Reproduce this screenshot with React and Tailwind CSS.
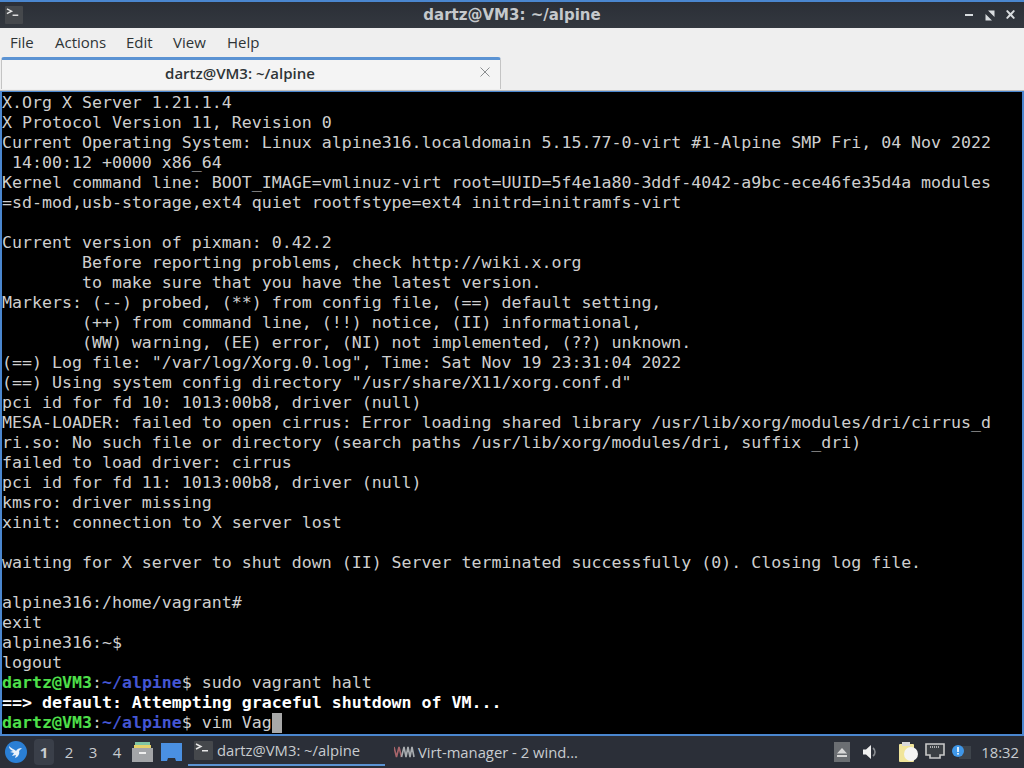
const LINES = [
  "X.Org X Server 1.21.1.4",
  "X Protocol Version 11, Revision 0",
  "Current Operating System: Linux alpine316.localdomain 5.15.77-0-virt #1-Alpine SMP Fri, 04 Nov 2022",
  " 14:00:12 +0000 x86_64",
  "Kernel command line: BOOT_IMAGE=vmlinuz-virt root=UUID=5f4e1a80-3ddf-4042-a9bc-ece46fe35d4a modules",
  "=sd-mod,usb-storage,ext4 quiet rootfstype=ext4 initrd=initramfs-virt",
  "",
  "Current version of pixman: 0.42.2",
  "        Before reporting problems, check http://wiki.x.org",
  "        to make sure that you have the latest version.",
  "Markers: (--) probed, (**) from config file, (==) default setting,",
  "        (++) from command line, (!!) notice, (II) informational,",
  "        (WW) warning, (EE) error, (NI) not implemented, (??) unknown.",
  '(==) Log file: "/var/log/Xorg.0.log", Time: Sat Nov 19 23:31:04 2022',
  '(==) Using system config directory "/usr/share/X11/xorg.conf.d"',
  "pci id for fd 10: 1013:00b8, driver (null)",
  "MESA-LOADER: failed to open cirrus: Error loading shared library /usr/lib/xorg/modules/dri/cirrus_d",
  "ri.so: No such file or directory (search paths /usr/lib/xorg/modules/dri, suffix _dri)",
  "failed to load driver: cirrus",
  "pci id for fd 11: 1013:00b8, driver (null)",
  "kmsro: driver missing",
  "xinit: connection to X server lost",
  "",
  "waiting for X server to shut down (II) Server terminated successfully (0). Closing log file.",
  "",
  "alpine316:/home/vagrant#",
  "exit",
  "alpine316:~$",
  "logout",
];

function Prompt() {
  return (
    <>
      <span className="font-bold text-[#4ee04a]">dartz@VM3</span>
      <span className="text-[#cfcfcf]">:</span>
      <span className="font-bold text-[#4456d4]">~/alpine</span>
      <span className="text-[#cfcfcf]">$ </span>
    </>
  );
}

function Menu() {
  const items = [["File", "w-[55px] pl-[10px]"], ["Actions", "w-[71px]"], ["Edit", "w-[47px]"], ["View", "w-[54px]"], ["Help", ""]];
  return (
    <div className="flex h-[29px] items-center bg-[#efefef] text-[15px] text-[#2e3436]">
      {items.map(([t, c]) => (
        <span key={t} className={c}>{t}</span>
      ))}
    </div>
  );
}

function WindowButtons() {
  return (
    <svg width="52" height="14" viewBox="0 0 52 14" className="text-[#d8dcdf]" fill="currentColor">
      <rect x="1" y="6" width="8" height="2" />
      <path d="M24 2.500h6.500V9zM21.500 6v6.500H28z" />
      <path d="M42 3l1.500-1 3 3 3-3 1.500 1-3 3.500 3 3.500-1.500 1-3-3-3 3-1.500-1 3-3.500z" />
    </svg>
  );
}

function Bird() {
  return (
    <svg width="24" height="24" viewBox="0 0 24 24">
      <circle cx="12" cy="12" r="11" fill="#2a7fd5" />
      <path d="M5 6c3 3 5 3 7 5 1-2 3-3 6-3l-3 3c1 3-1 6-4 7l1-3-4 1 2-3-4-1 3-1C7 10 5 9 5 6z" fill="#e8f1fb" />
    </svg>
  );
}

function Workspaces() {
  return (
    <div className="flex h-full items-center text-[15px] text-[#c8ccd0]">
      {["1", "2", "3", "4"].map((n, i) => (
        <span
          key={n}
          className={
            i === 0
              ? "mr-[3px] flex h-[26px] w-[20px] items-center justify-center rounded-sm bg-[#3a3f49] font-bold"
              : "flex h-[26px] w-[24px] items-center justify-center"
          }
        >
          {n}
        </span>
      ))}
    </div>
  );
}

function FileBox() {
  return (
    <svg width="21" height="20" viewBox="0 0 21 20">
      <path d="M3 0h15v3H3z" fill="#7fc6a4" />
      <path d="M2 3h17v3H2z" fill="#e5d26a" />
      <path d="M0 6h21v14H0z" fill="#a3a5a8" />
      <rect x="7" y="10" width="7" height="2" fill="#eeeeee" />
    </svg>
  );
}

function Desktop() {
  return (
    <svg width="21" height="19" viewBox="0 0 21 19">
      <path d="M0 0h21v18h-6l-1-3H7l-1 3H0z" fill="#4a90e2" />
    </svg>
  );
}

function TermIcon({ size = 19 }) {
  return (
    <svg width={size} height={size} viewBox="0 0 19 19">
      <rect width="19" height="19" rx="1" fill="#45484c" />
      <path d="M2 3l5 2.500-5 2.500" stroke="#e6e6e6" strokeWidth="1.400" fill="none" />
      <rect x="8" y="9" width="6" height="1.500" fill="#e6e6e6" />
    </svg>
  );
}

function VirtIcon() {
  return (
    <svg width="21" height="12" viewBox="0 0 21 12" fill="none" strokeWidth="1.600">
      <path d="M0 1l2.500 10L5 1l2.500 10" stroke="#a8656b" />
      <path d="M7.500 11L10 1l2 10 2-10 2 10 2-10 2 10" stroke="#a9adb0" />
    </svg>
  );
}

function Tray() {
  return (
    <div className="flex h-full items-center text-[#d4d7da]">
      <div className="flex h-[20px] w-[16px] items-center justify-center bg-[#6b6e72]">
        <svg width="10" height="9" viewBox="0 0 10 9" fill="#d8d8d8">
          <path d="M5 0l5 5.500H0z" />
          <rect y="7" width="10" height="2" />
        </svg>
      </div>
      <svg width="16" height="16" viewBox="0 0 16 16" className="ml-[12px]">
        <path d="M1 5.500h3L9 1v14l-5-4.500H1z" fill="#f0f0f0" />
        <path d="M11 4a5 5 0 0 1 0 8" stroke="#8a8d91" strokeWidth="1.600" fill="none" />
      </svg>
      <svg width="21" height="22" viewBox="0 0 21 22" className="ml-[20px]">
        <rect x="1" y="3" width="15" height="18" rx="1" fill="#f1e59a" />
        <rect x="4" y="1" width="8" height="4" fill="#d9d9d9" />
        <circle cx="13" cy="13" r="7" fill="#f4f4f4" />
      </svg>
      <svg width="20" height="18" viewBox="0 0 20 18" className="ml-[6px]">
        <path d="M1 1h18v11h-4v3H5v-3H1z" fill="#3b3f44" stroke="#c9c9c9" strokeWidth="1.600" />
        <path d="M5 4h10" stroke="#d8d8d8" strokeWidth="1.400" strokeDasharray="1 1" />
      </svg>
      <svg width="20" height="16" viewBox="0 0 20 16" className="ml-[6px]">
        <rect x="8" y="2" width="12" height="13" fill="#3e444b" />
        <circle cx="7" cy="7" r="6" fill="#3f97e8" />
        <rect x="6.200" y="3" width="1.600" height="5" fill="#fff" />
        <rect x="6.200" y="9" width="1.600" height="1.600" fill="#fff" />
      </svg>
      <span className="ml-[10px] mr-[5px] text-[14.800px] text-[#c8ccd0]">18:32</span>
    </div>
  );
}

export default function App() {
  return (
    <div className="flex h-[768px] w-[1024px] flex-col overflow-hidden bg-[#efefef] font-['Open_Sans','Noto_Sans',sans-serif]">
      {/* title bar */}
      <div className="flex h-[28px] shrink-0 items-center border-t-2 border-[#4a86cf] bg-gradient-to-b from-[#2b2f37] to-[#33383f] pl-[5px] pr-[8px]">
        <div className="w-[55px]"><TermIcon size={18} /></div>
        <span className="flex-1 text-center font-['DejaVu_Sans',sans-serif] text-[15px] font-bold text-[#c5c9cc]">dartz@VM3: ~/alpine</span>
        <div className="flex w-[52px]"><WindowButtons /></div>
      </div>

      <Menu />

      {/* tab strip */}
      <div className="relative h-[33px] shrink-0">
        <div className="absolute inset-x-0 bottom-[-0.5px] h-px bg-[#bdbdbd]" />
        <div className="relative ml-[1px] flex h-[32px] w-[500px] items-center justify-center rounded-t-[3px] border-x border-t-[3px] border-x-[#c4c4c4] border-t-[#5b93d3] bg-[#f4f4f4] pb-[3px] text-[15px] font-semibold text-[#2e3436]">
          <span className="mr-[22px]">dartz@VM3: ~/alpine</span>
          <svg width="10" height="10" viewBox="0 0 10 10" className="absolute right-[10px] top-[7px]" stroke="#8b8e90" strokeWidth="1">
            <path d="M0.500 0.500l9 9M9.500 0.500l-9 9" />
          </svg>
        </div>
      </div>

      {/* terminal */}
      <div className="min-h-0 flex-1 overflow-hidden border-x-2 border-t-2 border-[#4a86cf] bg-black pt-[1px]">
        <div className="-ml-[2px] whitespace-pre pl-[2px] font-['DejaVu_Sans_Mono',monospace] text-[16.600px] leading-[20px] text-[#cfcfcf]">
          {LINES.map((l, i) => (
            <div key={i} className="h-[20px]">{l}</div>
          ))}
          <div className="h-[20px]"><Prompt />sudo vagrant halt</div>
          <div className="h-[20px] font-bold text-white">==&gt; default: Attempting graceful shutdown of VM...</div>
          <div className="flex h-[20px]">
            <span><Prompt />vim Vag</span>
            <span className="h-[20px] w-[10px] bg-[#a8a8a8]" />
          </div>
        </div>
      </div>

      {/* taskbar */}
      <div className="flex h-[34px] shrink-0 items-center border-t-2 border-[#4a86cf] bg-[#2b2f38] pl-[4px]">
        <Bird />
        <div className="ml-[6px]"><Workspaces /></div>
        <div className="ml-[3px] flex items-center gap-[8px]">
          <FileBox />
          <Desktop />
        </div>
        <div className="ml-[6px] flex h-[30px] w-[197px] items-center self-start border-b-2 border-[#5b93d3] pl-[6px] text-[14.800px] text-[#c8ccd0]">
          <TermIcon />
          <span className="ml-[4px]">dartz@VM3: ~/alpine</span>
        </div>
        <div className="ml-[9px] flex h-full w-[195px] items-center text-[14.800px] text-[#c8ccd0]">
          <VirtIcon />
          <span className="ml-[3px]">Virt-manager - 2 wind...</span>
        </div>
        <div className="ml-auto h-full"><Tray /></div>
      </div>
    </div>
  );
}
